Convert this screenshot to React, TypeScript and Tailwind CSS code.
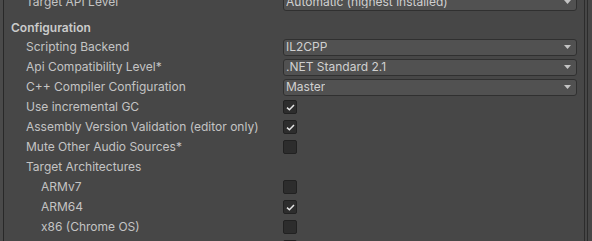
import type { ReactNode } from "react";

// Unity-style Player Settings inspector slice (dark skin).

type Row =
  | { kind: "dropdown"; label: string; value: string; depth: number }
  | { kind: "toggle"; label: string; checked: boolean; depth: number }
  | { kind: "label"; label: string; depth: number };

const rows: Row[] = [
  { kind: "dropdown", label: "Scripting Backend", value: "IL2CPP", depth: 1 },
  { kind: "dropdown", label: "Api Compatibility Level*", value: ".NET Standard 2.1", depth: 1 },
  { kind: "dropdown", label: "C++ Compiler Configuration", value: "Master", depth: 1 },
  { kind: "toggle", label: "Use incremental GC", checked: true, depth: 1 },
  { kind: "toggle", label: "Assembly Version Validation (editor only)", checked: true, depth: 1 },
  { kind: "toggle", label: "Mute Other Audio Sources*", checked: false, depth: 1 },
  { kind: "label", label: "Target Architectures", depth: 1 },
  { kind: "toggle", label: "ARMv7", checked: false, depth: 2 },
  { kind: "toggle", label: "ARM64", checked: true, depth: 2 },
  { kind: "toggle", label: "x86 (Chrome OS)", checked: false, depth: 2 },
  { kind: "toggle", label: "x86-64 (Chrome OS)", checked: false, depth: 2 },
];

// static map so every padding class is visible to Tailwind
const indent: Record<number, string> = {
  1: "pl-[22px]",
  2: "pl-[37px]",
};

function Dropdown({ value }: { value: string }) {
  return (
    <div className="flex h-[17px] w-full items-center justify-between rounded-[3px] border border-[#303030] bg-[#515151] pl-[2px] pr-[5px]">
      <span className="truncate leading-none text-[#d0d0d0]">{value}</span>
      <svg width="7" height="4" viewBox="0 0 7 4" className="shrink-0">
        <path d="M0 0h7L3.5 4z" fill="#c4c4c4" />
      </svg>
    </div>
  );
}

function Toggle({ checked }: { checked: boolean }) {
  return (
    <div className="flex h-[14px] w-[14px] items-center justify-center rounded-[2px] border border-[#212121] bg-[#2d2d2d]">
      {checked && (
        <svg width="9" height="7" viewBox="0 0 9 7">
          <path
            d="M1 3.6 3.4 5.8 8 1"
            fill="none"
            stroke="#e4e4e4"
            strokeWidth="1.5"
          />
        </svg>
      )}
    </div>
  );
}

function Field({
  label,
  depth,
  children,
}: {
  label: string;
  depth: number;
  children?: ReactNode;
}) {
  return (
    <div className="flex h-[20px] shrink-0 items-center">
      <div className={`w-[279px] shrink-0 truncate ${indent[depth]}`}>{label}</div>
      <div className="flex flex-1 items-center pr-[7px]">{children}</div>
    </div>
  );
}

export default function App() {
  return (
    <div
      className="flex h-[241px] w-[592px] overflow-hidden bg-[#474747] text-[12px] leading-[20px] text-[#c4c4c4]"
      style={{ fontFamily: "Inter, 'Noto Sans', sans-serif" }}
    >
      <div className="w-[3px] shrink-0 bg-[#4a4a4a]" />
      <div className="flex flex-1 flex-col border-l border-[#282828] -mt-[8px]">
        <Field label="Target API Level" depth={1}>
          <Dropdown value="Automatic (highest installed)" />
        </Field>
        <div className="h-[6px] shrink-0" />
        <div className="h-[19px] shrink-0 pl-[7px] font-semibold leading-[19px] text-[#cbcbcb]">
          Configuration
        </div>
        {rows.map((r) => (
          <Field key={r.label} label={r.label} depth={r.depth}>
            {r.kind === "dropdown" && <Dropdown value={r.value} />}
            {r.kind === "toggle" && <Toggle checked={r.checked} />}
          </Field>
        ))}
      </div>
      <div className="flex w-[8px] shrink-0">
        <div className="w-[1px] bg-[#2c2c2c]" />
        <div className="w-[2px] bg-[#474747]" />
        <div className="w-[1px] bg-[#2c2c2c]" />
        <div className="flex-1 bg-[#474747]" />
      </div>
    </div>
  );
}
